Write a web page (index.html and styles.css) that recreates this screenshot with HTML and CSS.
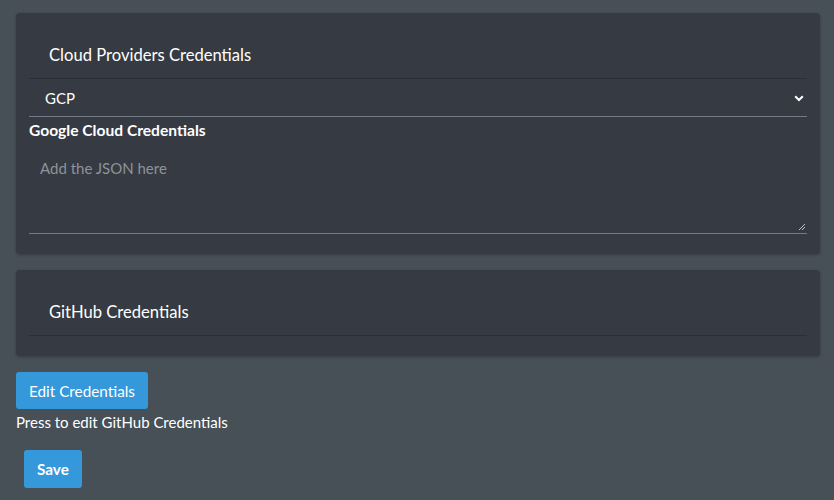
FILE: index.html
```html
<!DOCTYPE html>
<html>
<head>
<meta charset="utf-8">
<link rel="stylesheet" href="styles.css">
</head>
<body>
<div class="page">
  <section class="card">
    <h5 class="card-title">Cloud Providers Credentials</h5>
    <div class="select">
      <span>GCP</span>
      <svg class="chev" width="10" height="7" viewBox="0 0 10 7"><path d="M1.2 1.2 L5 5 L8.8 1.2" fill="none" stroke="#ffffff" stroke-width="2"/></svg>
    </div>
    <label class="field-label">Google Cloud Credentials</label>
    <div class="textarea">
      <span class="placeholder">Add the JSON here</span>
      <svg class="grip" width="8" height="8" viewBox="0 0 8 8"><path d="M7 1 L1 7 M7 4 L4 7" stroke="#bfc3c8" stroke-width="1"/></svg>
    </div>
  </section>
  <section class="card">
    <h5 class="card-title">GitHub Credentials</h5>
  </section>
  <button class="btn">Edit Credentials</button>
  <p class="hint">Press to edit GitHub Credentials</p>
  <button class="btn btn-save">Save</button>
</div>
</body>
</html>
```
FILE: styles.css
```css
html, body {
  margin: 0;
  padding: 0;
  background: #474f57;
  font-family: Lato, "Liberation Sans", sans-serif;
  color: #ffffff;
  font-size: 16px;
}
.page {
  padding: 13px 14px 0 16px;
  display: flex;
  flex-direction: column;
  align-items: flex-start;
}
.card {
  align-self: stretch;
  background: #363a42;
  border-radius: 4px;
  box-shadow: 0 1px 3px rgba(0,0,0,0.25);
  padding: 0 13px 20px 13px;
  margin-bottom: 16px;
}
.card-title {
  margin: 0;
  font-size: 16.6px;
  font-weight: 400;
  line-height: 20px;
  padding: 32px 20px 13px 20px;
  border-bottom: 1px solid #2b2f35;
}
.select {
  height: 37px;
  border-bottom: 1px solid #737b84;
  display: flex;
  align-items: center;
  justify-content: space-between;
  padding: 0 3px 0 16px;
  font-size: 15px;
}
.chev { margin-top: 1px; }
.field-label {
  display: block;
  font-weight: 700;
  font-size: 15.6px;
  line-height: 24px;
  margin-top: 1px;
}
.textarea {
  position: relative;
  height: 77px;
  padding: 14px 11px 0 11px;
  border-bottom: 1px solid #737b84;
}
.placeholder {
  color: #8d939a;
  font-size: 15px;
  line-height: 24px;
}
.grip {
  position: absolute;
  right: 1px;
  bottom: 2px;
}
.btn {
  font-family: inherit;
  font-size: 15.3px;
  color: #ffffff;
  background: #3498db;
  border: none;
  border-radius: 3px;
  height: 37px;
  padding: 0 13px;
  cursor: pointer;
}
.hint {
  margin: 1px 0 0 0;
  line-height: 24px;
  font-size: 15px;
}
.btn-save {
  margin: 16px 0 0 8px;
  height: 38px;
  padding: 0 13px;
  font-weight: 700;
}
```
